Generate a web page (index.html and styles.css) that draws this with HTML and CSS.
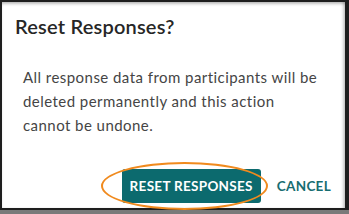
FILE: index.html
```html
<!DOCTYPE html>
<html lang="en">
<head>
  <meta charset="UTF-8">
  <title>Reset Responses?</title>
  <link rel="stylesheet" href="styles.css">
</head>
<body>
  <div class="dialog">
    <h2 class="dialog-title">Reset Responses?</h2>
    <p class="dialog-text">All response data from participants will be deleted permanently and this action cannot be undone.</p>
    <div class="dialog-actions">
      <div class="highlight-wrap">
        <button class="btn-primary">RESET RESPONSES</button>
        <span class="highlight-ring"></span>
      </div>
      <button class="btn-link">CANCEL</button>
    </div>
  </div>
</body>
</html>
```

FILE: styles.css
```css
html, body {
  margin: 0;
  padding: 0;
}

body {
  width: 349px;
  height: 214px;
  background-color: #7a7a7a;
  font-family: Lato, "Open Sans", sans-serif;
  overflow: hidden;
}

.dialog {
  box-sizing: border-box;
  width: 349px;
  height: 210px;
  background-color: #fff;
  border-top: 2px solid #1e1e1e;
  border-left: 2px solid #1e1e1e;
  border-right: 4px solid #1e1e1e;
  border-bottom: 2px solid #1e1e1e;
  box-shadow: inset 0 3px 3px -1px rgba(0, 0, 0, 0.25), inset -3px 0 3px -1px rgba(0, 0, 0, 0.2);
  padding: 12px 0 0 13px;
}

.dialog-title {
  margin: 0;
  font-size: 20px;
  line-height: 24px;
  font-weight: 600;
  color: #262626;
  letter-spacing: 0.2px;
}

.dialog-text {
  margin: 27px 0 0 8px;
  width: 300px;
  font-size: 15px;
  line-height: 24px;
  color: #454545;
  letter-spacing: 0.45px;
}

.dialog-actions {
  display: flex;
  align-items: center;
  justify-content: flex-end;
  margin-top: 32px;
  padding-right: 14px;
  gap: 16px;
}

.highlight-wrap {
  position: relative;
}

.btn-primary {
  display: block;
  height: 34px;
  padding: 0 8px;
  border: none;
  border-radius: 3px;
  background-color: #0c6a6e;
  color: #fff;
  font-family: Lato, "Open Sans", sans-serif;
  font-size: 13.5px;
  font-weight: 700;
  letter-spacing: 0.3px;
}

.btn-link {
  padding: 0;
  border: none;
  background: none;
  color: #176d71;
  font-family: Lato, "Open Sans", sans-serif;
  font-size: 13.5px;
  font-weight: 700;
  letter-spacing: 0.3px;
}

.highlight-ring {
  position: absolute;
  box-sizing: border-box;
  left: -21px;
  top: -7px;
  width: 167px;
  height: 48px;
  border: 2px solid #f08a1e;
  border-radius: 50%;
  pointer-events: none;
}
```
